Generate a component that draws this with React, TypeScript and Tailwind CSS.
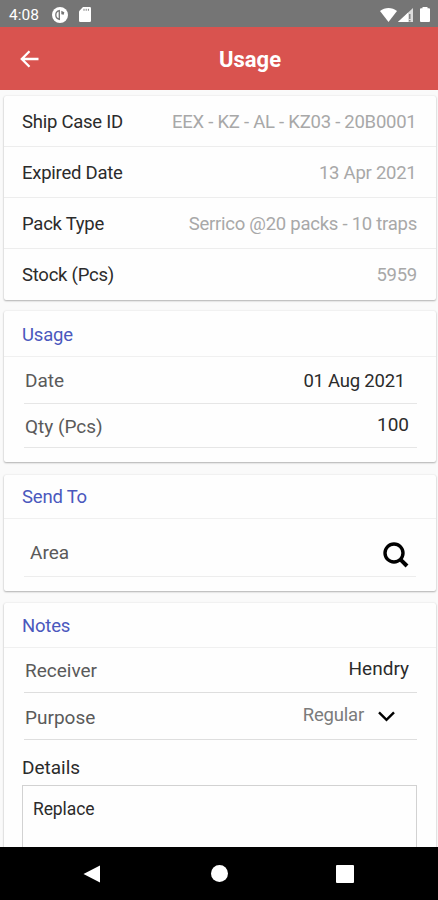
import type { ReactNode } from "react";

const info = [
  { label: "Ship Case ID", value: "EEX - KZ - AL - KZ03 - 20B0001", pad: "pr-[19.5px]" },
  { label: "Expired Date", value: "13 Apr 2021", pad: "pr-[19.5px]" },
  { label: "Pack Type", value: "Serrico @20 packs - 10 traps", pad: "pr-[19px]" },
  { label: "Stock (Pcs)", value: "5959", pad: "pr-[19px]" },
];

function Card({ className, children }: { className: string; children: ReactNode }) {
  return (
    <section
      className={`ml-[4px] mr-[2px] shrink-0 rounded-[2px] bg-[#fefefe] shadow-[0_1px_2px_rgba(0,0,0,0.28),0_0_2px_rgba(0,0,0,0.10)] ${className}`}
    >
      {children}
    </section>
  );
}

function Heading({ className, children }: { className: string; children: ReactNode }) {
  return (
    <h2
      className={`flex items-center border-b border-[#f0f0f0] pl-[18px] text-[18.5px] tracking-[-0.2px] text-[#4a58bd] ${className}`}
    >
      {children}
    </h2>
  );
}

export default function App() {
  return (
    <div className="flex h-[900px] w-[438px] flex-col overflow-hidden bg-[#fafafa] font-[Roboto,sans-serif] text-[19px] leading-none text-[#2b2b2b]">
      <div className="flex h-[27px] shrink-0 items-center bg-[#757575] pt-[2px] text-white">
        <span className="ml-[9px] w-[43px] pt-[2px] text-[15.5px]">4:08</span>
        <svg width="16" height="16" viewBox="0 0 16 16">
          <circle cx="8" cy="8" r="8" fill="#fff" />
          <path d="M8 12.500C5.200 12 3.800 10.200 3.800 8S5.200 4 7.300 3.600V12" fill="none" stroke="#757575" strokeWidth="1.300" />
          <path d="M9.300 3.800l3 1.400-.6 2.600-2.400-.5z" fill="#757575" />
        </svg>
        <svg className="ml-[11px]" width="12" height="15" viewBox="0 0 12 15">
          <path d="M4 0h6.8Q12 0 12 1.2v12.6q0 1.2-1.2 1.2H1.2Q0 15 0 13.800V4.200z" fill="#fff" />
          <path d="M5 1.800v2M7.200 1.800v2M9.400 1.800v2" stroke="#858585" strokeWidth="1" />
        </svg>
        <svg className="ml-auto" width="17" height="14" viewBox="0 0 17 14">
          <path d="M0 3C4.800-1 12.200-1 17 3L8.500 14z" fill="#fff" />
        </svg>
        <svg className="ml-[1px]" width="15" height="14" viewBox="0 0 15 14">
          <path d="M15 0v14H0z" fill="#fff" fillOpacity=".75" />
          <path d="M10 4.700V14H0z" fill="#fff" />
          <path d="M11.800 6v5M11.800 12v1.500" stroke="#757575" strokeWidth="1.300" />
        </svg>
        <svg className="ml-[7px] mr-[8px]" width="10" height="15" viewBox="0 0 10 15">
          <path d="M2.500 0h5v1.200H9q1 0 1 1V14q0 1-1 1H1q-1 0-1-1V2.200q0-1 1-1h1.500z" fill="#fff" />
        </svg>
      </div>

      <header className="flex h-[63px] shrink-0 items-center bg-[#d9534f] text-white">
        <svg className="ml-[20px]" width="20" height="18" viewBox="0 0 20 18">
          <path d="M18.500 9H2M9.500 1.300L1.800 9l7.700 7.700" fill="none" stroke="#fff" strokeWidth="2.300" />
        </svg>
        <h1 className="ml-[179px] pt-[3px] text-[22px] font-bold">Usage</h1>
      </header>

      <main className="flex min-h-0 grow flex-col overflow-hidden pt-[6px]">
        <Card className="h-[204px]">
          {info.map((row) => (
            <div
              key={row.label}
              className={`flex h-[51px] items-center justify-between whitespace-nowrap border-b border-[#ededed] pl-[18px] pt-[3px] text-[18.5px] tracking-[-0.25px] last:border-b-0 last:pt-[2px] ${row.pad}`}
            >
              <span>{row.label}</span>
              <span className="text-[#a8a8a8]">{row.value}</span>
            </div>
          ))}
        </Card>

        <Card className="mt-[11px] h-[151px]">
          <Heading className="h-[46px] pt-[4px]">Usage</Heading>
          <div className="ml-[20px] mr-[19px] flex h-[47px] items-center justify-between border-b border-[#e6e6e6] pl-px pr-[12px]">
            <span className="text-[#5a5a5a]">Date</span>
            <span className="pt-[2px] text-[18.5px] tracking-[-0.23px]">01 Aug 2021</span>
          </div>
          <div className="ml-[20px] mr-[19px] flex h-[44px] items-center justify-between border-b border-[#e6e6e6] pl-px pr-[8px]">
            <span className="pt-[2px] text-[#5a5a5a]">Qty (Pcs)</span>
            <span className="pb-[3px]">100</span>
          </div>
        </Card>

        <Card className="mt-[13px] h-[116px]">
          <Heading className="h-[44px] pt-[2px]">Send To</Heading>
          <div className="ml-[20px] mr-[20px] flex h-[58px] items-center justify-between border-b border-[#ededed] pl-[6px] pr-[7px] pt-[10px]">
            <span className="text-[#5a5a5a]">Area</span>
            <svg className="mt-[5px]" width="26" height="26" viewBox="0 0 26 26">
              <circle cx="11" cy="11" r="9" fill="none" stroke="#000" strokeWidth="3.400" />
              <path d="M17.300 17.300l6.700 6.700" stroke="#000" strokeWidth="4" />
            </svg>
          </div>
        </Card>

        <Card className="mt-[12px] h-[320px]">
          <Heading className="h-[45px] pt-[3px]">Notes</Heading>
          <div className="ml-[20px] mr-[19px] flex h-[45px] items-center justify-between border-b border-[#dedede] pl-px pr-[8px]">
            <span className="pt-px text-[#5a5a5a]">Receiver</span>
            <span className="pb-[4px]">Hendry</span>
          </div>
          <div className="ml-[20px] mr-[19px] flex h-[47px] items-center border-b border-[#dedede] pl-px">
            <span className="pt-[2px] text-[#5a5a5a]">Purpose</span>
            <span className="ml-auto pb-[2px] text-[18.5px] tracking-[-0.2px] text-[#7b7b7b]">Regular</span>
            <svg className="ml-[14px] mr-[22px]" width="17" height="11" viewBox="0 0 17 11">
              <path d="M1 1.300l7.500 7.500L16 1.300" fill="none" stroke="#000" strokeWidth="2.400" />
            </svg>
          </div>
          <div className="flex h-[45px] items-center pl-[18px] pt-[10px]">Details</div>
          <div className="ml-[18px] mr-[19px] h-[120px] border border-[#d2d2d2] pl-[10px] pt-[15px] text-[17.500px] tracking-[-0.1px]">
            Replace
          </div>
        </Card>
      </main>

      <nav className="flex h-[53px] shrink-0 items-center bg-black">
        <svg className="ml-[83px]" width="18" height="18" viewBox="0 0 18 18">
          <path d="M0.500 9L17 0.500v17z" fill="#fff" />
        </svg>
        <span className="ml-[110px] size-[17px] rounded-full bg-white" />
        <span className="ml-[108px] size-[18px] rounded-[1px] bg-white" />
      </nav>
    </div>
  );
}
